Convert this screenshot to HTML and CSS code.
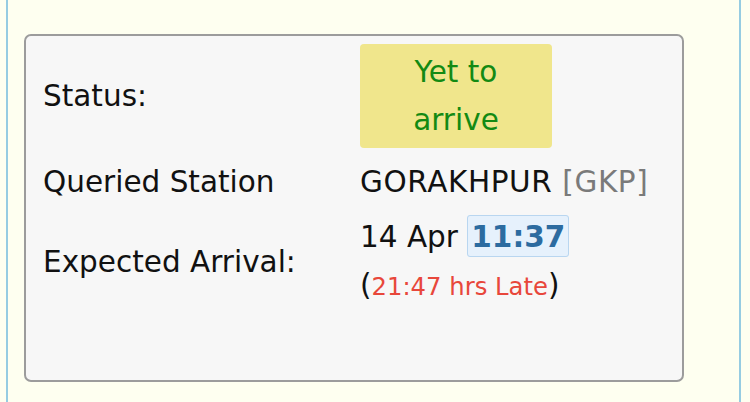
FILE: index.html
```html
<!DOCTYPE html>
<html lang="en">
<head>
    <meta charset="UTF-8">
    <meta name="viewport" content="width=device-width, initial-scale=1.0">
    <title>Train Status</title>
    <link rel="stylesheet" href="styles.css">
</head>
<body>
    <div class="page">
        <div class="status-card">
            <div class="row row-status">
                <div class="label">Status:</div>
                <div class="value"><span class="badge">Yet to arrive</span></div>
            </div>
            <div class="row row-station">
                <div class="label">Queried Station</div>
                <div class="value station">GORAKHPUR <span class="code">[GKP]</span></div>
            </div>
            <div class="row row-arrival">
                <div class="label">Expected Arrival:</div>
                <div class="value">
                    14 Apr <span class="time">11:37</span><br>
                    (<span class="late">21:47 hrs Late</span>)
                </div>
            </div>
        </div>
    </div>
</body>
</html>
```

FILE: styles.css
```css
html, body {
    height: 100%;
}
body {
    margin: 0;
    background-color: #fefff0;
    font-family: "DejaVu Sans", Verdana, sans-serif;
    font-size: 29.5px;
    line-height: 47px;
    color: #111;
}
.page {
    box-sizing: border-box;
    height: 100%;
    margin: 0 9px 0 6px;
    padding: 34px 0 0 16px;
    border-left: 2px solid #96cce2;
    border-right: 2px solid #96cce2;
}
.status-card {
    box-sizing: border-box;
    width: 660px;
    height: 348px;
    padding: 8px 0 0 17px;
    background-color: #f7f7f7;
    border: 2px solid #9c9c9c;
    border-radius: 7px;
}
.row {
    display: flex;
    align-items: center;
}
.label {
    flex: 0 0 317px;
}
.row-station {
    margin-top: 11px;
}
.row-arrival {
    margin-top: 7px;
    line-height: 48px;
}
.badge {
    display: block;
    box-sizing: border-box;
    width: 192px;
    padding: 5px 12px 4px;
    background-color: #f0e68c;
    border-radius: 4px;
    color: #138a13;
    text-align: center;
    line-height: 47.5px;
}
.station {
    letter-spacing: 0.6px;
}
.code {
    color: #7a7a7a;
}
.time {
    padding: 4px 3px 2px;
    background-color: #e6f1fc;
    border: 1px solid #b9d6f0;
    border-radius: 3px;
    color: #2c6ba0;
    font-weight: bold;
}
.late {
    font-size: 24.3px;
    color: #e8473b;
}
```
